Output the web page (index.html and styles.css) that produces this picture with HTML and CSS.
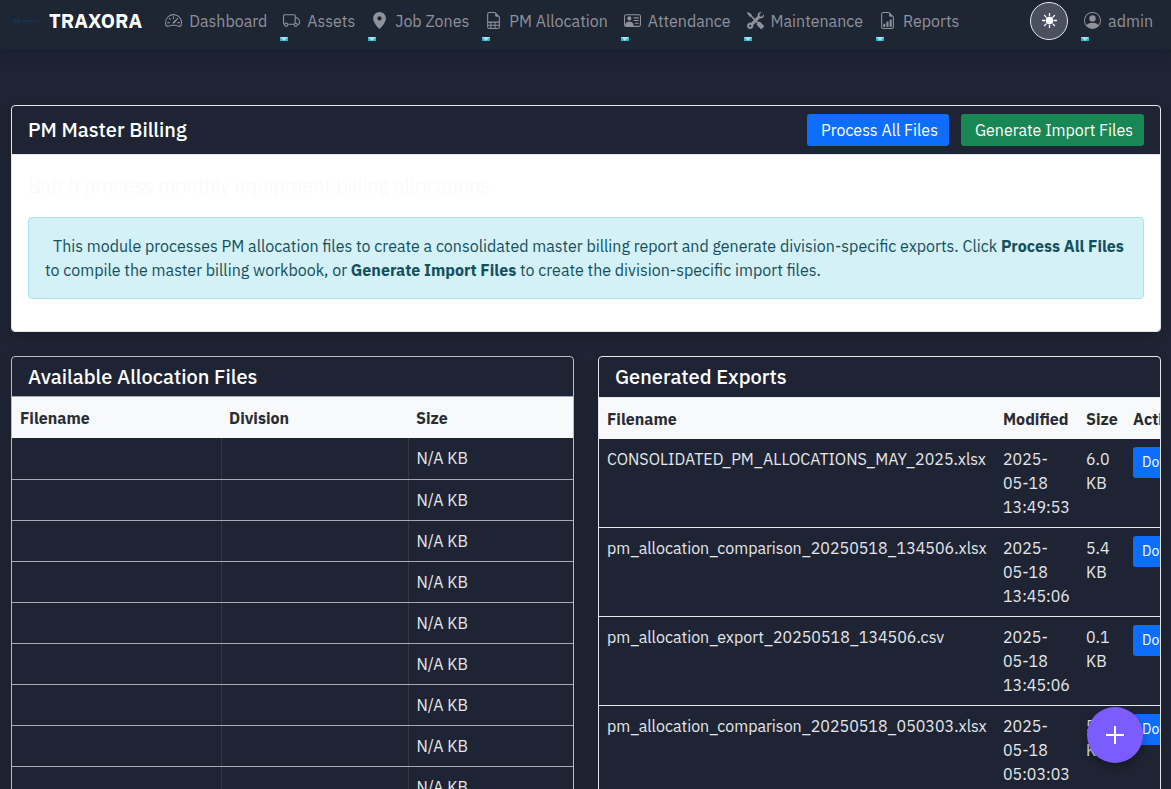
FILE: index.html
```html
<!DOCTYPE html>
<html lang="en">
<head>
<meta charset="utf-8">
<meta name="viewport" content="width=device-width, initial-scale=1">
<title>TRAXORA - PM Master Billing</title>
<link rel="stylesheet" href="styles.css">
</head>
<body>
<header class="navbar">
  <a class="brand" href="#">
    <svg class="brand-logo" viewBox="0 0 28 8" aria-hidden="true"><path d="M4.500.8 7.700 2.500v3L4.500 7.200 1.300 5.500v-3z" fill="none" stroke="currentColor"/><path d="M0 3.500h9M2 5h5" stroke="currentColor"/><path d="M10 4h17" stroke="currentColor" stroke-width="2" stroke-dasharray="2 .6"/></svg>
    <span>TRAXORA</span>
  </a>
  <nav class="nav-list">
    <a class="nav-link" href="#"><svg class="icon" viewBox="0 0 16 16" aria-hidden="true"><path d="M8 4a.5.5 0 0 1 .5.5V6a.5.5 0 0 1-1 0V4.5A.5.5 0 0 1 8 4zM3.732 5.732a.5.5 0 0 1 .707 0l.915.914a.5.5 0 1 1-.708.708l-.914-.915a.5.5 0 0 1 0-.707zM2 10a.5.5 0 0 1 .5-.5h1.586a.5.5 0 0 1 0 1H2.5A.5.5 0 0 1 2 10zm9.5 0a.5.5 0 0 1 .5-.5h1.5a.5.5 0 0 1 0 1H12a.5.5 0 0 1-.5-.5zm.754-4.246a.389.389 0 0 0-.527-.02L7.547 9.31a.91.91 0 1 0 1.302 1.258l3.434-4.297a.389.389 0 0 0-.029-.518z"/><path fill-rule="evenodd" d="M0 10a8 8 0 1 1 15.547 2.661c-.442 1.253-1.845 1.602-2.932 1.25C11.309 13.488 9.475 13 8 13c-1.474 0-3.31.488-4.615.911-1.087.352-2.49.003-2.932-1.25A7.988 7.988 0 0 1 0 10zm8-7a7 7 0 0 0-6.603 9.329c.203.575.923.876 1.68.63C4.397 12.533 6.358 12 8 12s3.604.532 4.923.96c.757.245 1.477-.056 1.68-.631A7 7 0 0 0 8 3z"/></svg>Dashboard</a>
    <a class="nav-link dropdown" href="#"><svg class="icon" viewBox="0 0 16 16" aria-hidden="true"><path d="M0 3.5A1.5 1.5 0 0 1 1.5 2h9A1.5 1.5 0 0 1 12 3.5V5h1.02a1.5 1.5 0 0 1 1.17.563l1.481 1.85a1.5 1.5 0 0 1 .329.938V10.5a1.5 1.5 0 0 1-1.5 1.5H14a2 2 0 1 1-4 0H5a2 2 0 1 1-3.998-.085A1.5 1.5 0 0 1 0 10.5v-7zm1.294 7.456A1.999 1.999 0 0 1 4.732 11h5.536a2.01 2.01 0 0 1 .732-.732V3.5a.5.5 0 0 0-.5-.5h-9a.5.5 0 0 0-.5.5v7a.5.5 0 0 0 .294.456zM12 10a2 2 0 0 1 1.732 1h.768a.5.5 0 0 0 .5-.5V8.35a.5.5 0 0 0-.11-.312l-1.48-1.85A.5.5 0 0 0 13.02 6H12v4zm-9 1a1 1 0 1 0 0 2 1 1 0 0 0 0-2zm9 0a1 1 0 1 0 0 2 1 1 0 0 0 0-2z"/></svg>Assets</a>
    <a class="nav-link dropdown" href="#"><svg class="icon" viewBox="0 0 16 16" aria-hidden="true"><path d="M8 16s6-5.686 6-10A6 6 0 0 0 2 6c0 4.314 6 10 6 10zm0-8a2 2 0 1 1 0-4 2 2 0 0 1 0 4z"/></svg>Job Zones</a>
    <a class="nav-link dropdown" href="#"><svg class="icon" viewBox="0 0 16 16" aria-hidden="true"><path d="M14 14V4.5L9.5 0H4a2 2 0 0 0-2 2v12a2 2 0 0 0 2 2h8a2 2 0 0 0 2-2zM9.5 3A1.5 1.5 0 0 0 11 4.5h2V9H3V2a1 1 0 0 1 1-1h5.5v2zM3 12v-2h2v2H3zm0 1h2v2H4a1 1 0 0 1-1-1v-1zm3 2v-2h3v2H6zm4 0v-2h3v1a1 1 0 0 1-1 1h-2zm3-3h-3v-2h3v2zm-7 0v-2h3v2H6z"/></svg>PM Allocation</a>
    <a class="nav-link dropdown" href="#"><svg class="icon" viewBox="0 0 16 16" aria-hidden="true"><path d="M5 8a2 2 0 1 0 0-4 2 2 0 0 0 0 4zm4-2.5a.5.5 0 0 1 .5-.5h4a.5.5 0 0 1 0 1h-4a.5.5 0 0 1-.5-.5zM9 8a.5.5 0 0 1 .5-.5h4a.5.5 0 0 1 0 1h-4A.5.5 0 0 1 9 8zm1 2.5a.5.5 0 0 1 .5-.5h3a.5.5 0 0 1 0 1h-3a.5.5 0 0 1-.5-.5z"/><path d="M2 2a2 2 0 0 0-2 2v8a2 2 0 0 0 2 2h12a2 2 0 0 0 2-2V4a2 2 0 0 0-2-2H2zM1 4a1 1 0 0 1 1-1h12a1 1 0 0 1 1 1v8a1 1 0 0 1-1 1H8.96c.026-.163.04-.33.04-.5C9 10.567 7.21 9 5 9c-2.086 0-3.8 1.398-3.984 3.181A1.006 1.006 0 0 1 1 12V4z"/></svg>Attendance</a>
    <a class="nav-link dropdown" href="#"><svg class="icon" viewBox="0 0 16 16" aria-hidden="true"><path d="M1 0 0 1l2.2 3.081a1 1 0 0 0 .815.419h.07a1 1 0 0 1 .708.293l2.675 2.675-2.617 2.654A3.003 3.003 0 0 0 0 13a3 3 0 1 0 5.878-.851l2.654-2.617.968.968-.305.914a1 1 0 0 0 .242 1.023l3.27 3.27a.997.997 0 0 0 1.414 0l1.586-1.586a.997.997 0 0 0 0-1.414l-3.27-3.27a1 1 0 0 0-1.023-.242L10.5 9.5l-.96-.96 2.68-2.643A3.005 3.005 0 0 0 16 3c0-.269-.035-.53-.102-.777l-2.14 2.141L12 4l-.364-1.757L13.777.102a3 3 0 0 0-3.675 3.68L7.462 6.46 4.793 3.793a1 1 0 0 1-.293-.707v-.071a1 1 0 0 0-.419-.814L1 0zM3 12a1 1 0 1 1 0 2 1 1 0 0 1 0-2z"/></svg>Maintenance</a>
    <a class="nav-link dropdown" href="#"><svg class="icon" viewBox="0 0 16 16" aria-hidden="true"><path d="M10 13.5a.5.5 0 0 0 .5.5h1a.5.5 0 0 0 .5-.5v-6a.5.5 0 0 0-.5-.5h-1a.5.5 0 0 0-.5.5v6zm-2.5.5a.5.5 0 0 1-.5-.5v-4a.5.5 0 0 1 .5-.5h1a.5.5 0 0 1 .5.5v4a.5.5 0 0 1-.5.5h-1zm-3 0a.5.5 0 0 1-.5-.5v-2a.5.5 0 0 1 .5-.5h1a.5.5 0 0 1 .5.5v2a.5.5 0 0 1-.5.5h-1z"/><path d="M14 14V4.5L9.5 0H4a2 2 0 0 0-2 2v12a2 2 0 0 0 2 2h8a2 2 0 0 0 2-2zM9.5 3A1.5 1.5 0 0 0 11 4.5h2V14a1 1 0 0 1-1 1H4a1 1 0 0 1-1-1V2a1 1 0 0 1 1-1h5.5v2z"/></svg>Reports</a>
  </nav>
  <div class="nav-end">
    <button class="theme-toggle" type="button" aria-label="Switch theme"><svg class="sun" viewBox="0 0 16 16" aria-hidden="true"><circle cx="8" cy="8" r="4" fill="currentColor"/><path d="M8 .5v2.500M8 13v2.500M.5 8h2.500M13 8h2.500M2.700 2.700l1.700 1.700M11.600 11.600l1.700 1.700M2.700 13.300l1.700-1.700M11.600 4.400l1.700-1.700" stroke="currentColor" stroke-width="1.400" stroke-linecap="round"/></svg></button>
    <a class="nav-link dropdown" href="#"><svg class="icon" viewBox="0 0 16 16" aria-hidden="true"><path d="M11 6a3 3 0 1 1-6 0 3 3 0 0 1 6 0z"/><path fill-rule="evenodd" d="M0 8a8 8 0 1 1 16 0A8 8 0 0 1 0 8zm8-7a7 7 0 0 0-5.468 11.370C3.242 11.226 4.805 10 8 10s4.757 1.225 5.468 2.370A7 7 0 0 0 8 1z"/></svg>admin</a>
  </div>
</header>
<main class="page">
  <section class="card">
    <div class="card-header intro-header">
      <h1 class="card-title">PM Master Billing</h1>
      <div class="actions">
        <button class="btn btn-primary" type="button">Process All Files</button>
        <button class="btn btn-success" type="button">Generate Import Files</button>
      </div>
    </div>
    <div class="card-body">
      <p class="lead">Batch process monthly equipment billing allocations</p>
      <div class="alert">This module processes PM allocation files to create a consolidated master billing report and generate division-specific exports. Click <strong>Process All Files</strong> to compile the master billing workbook, or <strong>Generate Import Files</strong> to create the division-specific import files.</div>
    </div>
  </section>
  <div class="columns">
    <section class="card files">
      <div class="card-header"><h2 class="card-title">Available Allocation Files</h2></div>
      <table class="table files-table">
        <colgroup><col class="col-file"><col class="col-division"><col></colgroup>
        <thead><tr><th>Filename</th><th>Division</th><th>Size</th></tr></thead>
        <tbody>
          <tr><td></td><td></td><td>N/A KB</td></tr>
          <tr><td></td><td></td><td>N/A KB</td></tr>
          <tr><td></td><td></td><td>N/A KB</td></tr>
          <tr><td></td><td></td><td>N/A KB</td></tr>
          <tr><td></td><td></td><td>N/A KB</td></tr>
          <tr><td></td><td></td><td>N/A KB</td></tr>
          <tr><td></td><td></td><td>N/A KB</td></tr>
          <tr><td></td><td></td><td>N/A KB</td></tr>
          <tr><td></td><td></td><td>N/A KB</td></tr>
        </tbody>
      </table>
    </section>
    <section class="card exports">
      <div class="card-header"><h2 class="card-title">Generated Exports</h2></div>
      <div class="table-clip">
      <table class="table exports-table">
        <colgroup><col class="col-export"><col class="col-modified"><col class="col-size"><col class="col-action"></colgroup>
        <thead><tr><th>Filename</th><th>Modified</th><th>Size</th><th>Actions</th></tr></thead>
        <tbody>
          <tr><td>CONSOLIDATED_PM_ALLOCATIONS_MAY_2025.xlsx</td><td>2025-05-18 13:49:53</td><td>6.0 KB</td><td><a class="btn btn-primary btn-small" href="#">Download</a></td></tr>
          <tr><td>pm_allocation_comparison_20250518_134506.xlsx</td><td>2025-05-18 13:45:06</td><td>5.4 KB</td><td><a class="btn btn-primary btn-small" href="#">Download</a></td></tr>
          <tr><td>pm_allocation_export_20250518_134506.csv</td><td>2025-05-18 13:45:06</td><td>0.1 KB</td><td><a class="btn btn-primary btn-small" href="#">Download</a></td></tr>
          <tr><td>pm_allocation_comparison_20250518_050303.xlsx</td><td>2025-05-18 05:03:03</td><td>5.4 KB</td><td><a class="btn btn-primary btn-small" href="#">Download</a></td></tr>
        </tbody>
      </table>
      </div>
    </section>
  </div>
</main>
<button class="fab" type="button" aria-label="Add"><svg class="plus" viewBox="0 0 20 20" aria-hidden="true"><path d="M10 1v18M1 10h18" stroke="currentColor" stroke-width="2"/></svg></button>
</body>
</html>
```
FILE: styles.css
```css
* { box-sizing: border-box; }
html { height: 100%; overflow: hidden; }
body {
  margin: 0;
  height: 100%;
  overflow: hidden;
  background: #1e2433;
  color: #e5e7eb;
  font-family: "IBM Plex Sans", Inter, sans-serif;
  font-size: 16px;
  line-height: 24px;
}
.navbar {
  display: flex;
  align-items: center;
  height: 49px;
  padding: 0 10px 8px 12px;
  background: #1e2533;
  box-shadow: 0 4px 20px rgba(16, 16, 48, 0.3);
}
.brand {
  display: flex;
  align-items: center;
  gap: 9px;
  color: #fff;
  font-size: 20px;
  font-weight: 700;
  text-decoration: none;
}
.brand-logo { width: 28px; height: 8px; color: #173453; }
.nav-list { display: flex; gap: 1px; margin-left: 16px; }
.nav-link {
  position: relative;
  display: flex;
  align-items: center;
  gap: 7px;
  padding: 8px 8px 8px 7px;
  color: #8f929b;
  text-decoration: none;
}
.icon { width: 17px; height: 17px; fill: currentColor; }
.dropdown::after {
  content: "";
  position: absolute;
  left: 4px;
  bottom: 0;
  border: 4px solid #22b8d8;
  border-top-color: #a5e1ef;
  border-bottom-width: 0;
}
.nav-end { display: flex; align-items: center; gap: 9px; margin-left: auto; }
.theme-toggle {
  display: flex;
  align-items: center;
  justify-content: center;
  width: 38px;
  height: 38px;
  padding: 0;
  border: 1px solid #e5e7eb;
  border-radius: 50%;
  background: #4a505e;
  color: #fff;
}
.sun { width: 15px; height: 15px; }
.page { padding: 56px 10px 0 11px; }
.card {
  min-width: 0;
  overflow: hidden;
  border: 1px solid #e5e7eb;
  border-radius: 4px;
  box-shadow: 0 4px 12px rgba(0, 0, 0, 0.15);
}
.card-header { padding: 8px 16px; border-bottom: 1px solid #e5e7eb; }
.intro-header { display: flex; align-items: center; justify-content: space-between; }
.card-title { margin: 0; color: #fff; font-size: 20px; font-weight: 500; line-height: 24px; }
.actions { display: flex; gap: 12px; }
.btn {
  display: inline-block;
  padding: 4px 11px 4px 14px;
  border: 0;
  border-radius: 3px;
  color: #fff;
  font: inherit;
  text-decoration: none;
}
.btn-primary { background: #0d6efd; }
.btn-success { background: #198754; }
.btn-small { padding: 5px 9px; font-size: 14px; line-height: 21px; }
.card-body { padding: 16px 16px 32px; background: #fff; }
.lead { margin: 0 0 16px; color: #f7fafc; font-size: 20px; font-weight: 300; line-height: 30px; }
.alert {
  padding: 16px;
  border: 1px solid #a8e3ee;
  border-radius: 4px;
  background: #d3f1f7;
  color: #13505d;
  text-indent: 8px;
}
.columns { display: grid; grid-template-columns: 1fr 1fr; gap: 24px; margin-top: 24px; }
.table { width: 100%; border-collapse: collapse; table-layout: fixed; }
.table th {
  height: 41px;
  padding: 8px;
  background: #f8f9fb;
  color: #292c32;
  font-weight: 700;
  text-align: left;
}
.table td { padding: 8px; border-bottom: 1px solid #e5e7eb; vertical-align: top; }
.files { border-color: #b8bdc6; }
.files .card-header { padding-bottom: 7px; border-color: #a5aab3; }
.files-table td { height: 41px; border-color: #a5aab3; border-right: 1px solid #323846; }
.files-table td:last-child { border-right: 0; }
.col-file { width: 209px; }
.col-division { width: 187px; }
.table-clip { overflow: hidden; }
.exports-table { width: 632px; }
.col-export { width: 396px; }
.col-modified { width: 83px; }
.col-size { width: 47px; }
.fab {
  position: fixed;
  right: 28px;
  bottom: 26px;
  display: flex;
  align-items: center;
  justify-content: center;
  width: 56px;
  height: 56px;
  padding: 0;
  border: 0;
  border-radius: 50%;
  background: #7a5cff;
  color: #fff;
  box-shadow: 0 4px 10px rgba(0, 0, 0, 0.3);
}
.plus { width: 20px; height: 20px; }
```
